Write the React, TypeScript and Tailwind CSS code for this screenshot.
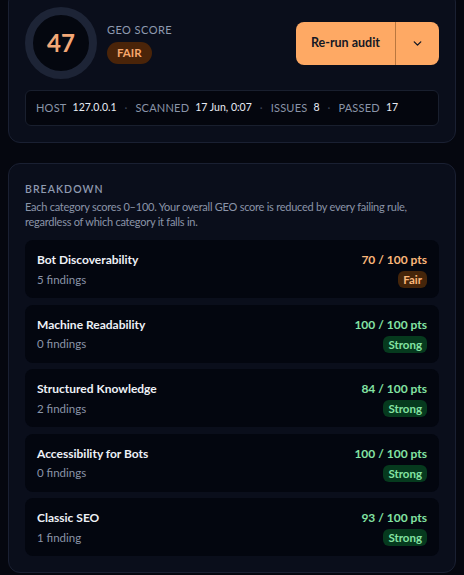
import { ChevronDown } from "lucide-react";

const categories = [
  { name: "Bot Discoverability", findings: "5 findings", score: 70, label: "Fair" },
  { name: "Machine Readability", findings: "0 findings", score: 100, label: "Strong" },
  { name: "Structured Knowledge", findings: "2 findings", score: 84, label: "Strong" },
  { name: "Accessibility for Bots", findings: "0 findings", score: 100, label: "Strong" },
  { name: "Classic SEO", findings: "1 finding", score: 93, label: "Strong" },
];

const meta = [
  { k: "Host", v: "127.0.0.1" },
  { k: "Scanned", v: "17 Jun, 0:07" },
  { k: "Issues", v: "8" },
  { k: "Passed", v: "17" },
];

const ScoreRing = () => (
  <div className="relative w-[72px] h-[72px] shrink-0">
    <svg width="72" height="72" viewBox="0 0 72 72">
      <circle cx="36" cy="36" r="32" fill="#04070f" stroke="#1d2436" strokeWidth="8" />
    </svg>
    <div className="absolute inset-0 flex items-center justify-center text-[24px] font-bold text-[#f3a877]">
      47
    </div>
  </div>
);

export default function App() {
  return (
    <div
      className="min-h-[575px] bg-[#05070f] px-2 overflow-hidden"
      style={{ fontFamily: 'Lato, "Noto Sans", sans-serif' }}
    >
      {/* Header card */}
      <div className="-mt-[10px] rounded-xl border border-[#1a2032] bg-[#0a0e1b] px-4 pt-4 pb-4">
        <div className="flex items-center justify-between">
          <div className="flex items-center gap-[10px]">
            <ScoreRing />
            <div className="flex flex-col gap-[4px]">
              <div className="text-[11px] leading-4 tracking-[0.04em] text-[#8f9ab0]">GEO SCORE</div>
              <span className="w-fit rounded-full bg-[#4a2409] px-[10px] py-[3px] text-[11.5px] font-bold leading-4 text-[#f7a76c]">
                FAIR
              </span>
            </div>
          </div>
          <div className="flex h-[43px] overflow-hidden rounded-lg bg-[#fea964] text-[#141824]">
            <button className="w-[100px] border-r border-[#b9773f] text-[12.5px] font-bold">
              Re-run audit
            </button>
            <button className="flex w-[43px] items-center justify-center">
              <ChevronDown size={13} strokeWidth={2.5} />
            </button>
          </div>
        </div>
        <div className="mt-[11px] flex h-[36px] items-center whitespace-nowrap rounded-md border border-[#191f2e] bg-[#04060e] px-[10px] text-[11px]">
          {meta.map((m, i) => (
            <div key={m.k} className="flex items-center">
              {i > 0 && <span className="mx-[8px] text-[#3a4255]">·</span>}
              <span className="tracking-[0.02em] text-[#8a94a8] uppercase">{m.k}</span>
              <span className="ml-[6px] text-[10.5px] text-[#e8ecf4]">{m.v}</span>
            </div>
          ))}
        </div>
      </div>

      {/* Breakdown card */}
      <div className="mt-5 rounded-xl border border-[#1a2032] bg-[#0a0e1b] px-4 pt-[17px] pb-4">
        <div className="text-[10.5px] font-semibold leading-4 tracking-[0.1em] text-[#8f9ab0]">BREAKDOWN</div>
        <p className="mt-[3px] text-[11px] leading-[14.5px] tracking-[-0.25px] text-[#8a94a8]">
          Each category scores 0–100. Your overall GEO score is reduced by every failing rule,
          regardless of which category it falls in.
        </p>
        <div className="mt-[11px] flex flex-col gap-[6.5px]">
          {categories.map((c) => {
            const fair = c.label === "Fair";
            return (
              <div key={c.name} className="rounded-lg bg-[#03060f] px-3 pt-3 pb-[10px]">
                <div className="flex items-center justify-between leading-4">
                  <span className="text-[12px] font-bold text-[#eef1f7]">{c.name}</span>
                  <span className={fair ? "text-[12px] font-bold text-[#fbb77a]" : "text-[12px] font-bold text-[#84e3a3]"}>
                    {c.score} / 100 pts
                  </span>
                </div>
                <div className="mt-[3px] flex h-[17px] items-center justify-between">
                  <span className="text-[11.5px] text-[#8a94a8]">{c.findings}</span>
                  <span
                    className={
                      fair
                        ? "rounded-md bg-[#45250a] px-[5px] text-[11.5px] font-bold leading-[17px] text-[#fbb77a]"
                        : "rounded-md bg-[#063a1e] px-[5px] text-[11.5px] font-bold leading-[17px] text-[#84e3a3]"
                    }
                  >
                    {c.label}
                  </span>
                </div>
              </div>
            );
          })}
        </div>
      </div>
    </div>
  );
}
